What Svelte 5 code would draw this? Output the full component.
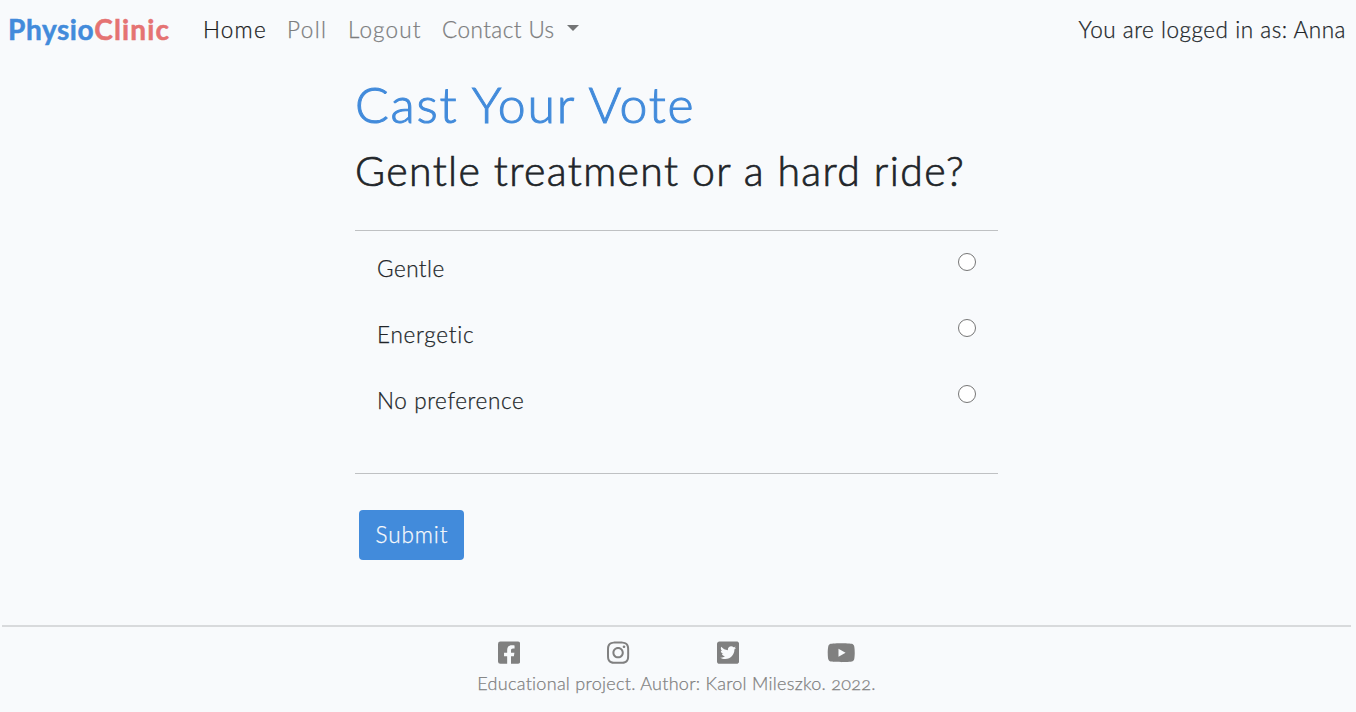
<script>
  const links = [
    { label: 'Home', width: 84, spacing: 1.2, active: true },
    { label: 'Poll', width: 61, spacing: 1.4 },
    { label: 'Logout', width: 94, spacing: 1.15 },
    { label: 'Contact Us', width: 137, spacing: 0.45, menu: true }
  ];
  const options = [
    { label: 'Gentle', spacing: 0.5 },
    { label: 'Energetic', spacing: 0.73 },
    { label: 'No preference', spacing: 0.62 }
  ];
  const socials = [
    { name: 'Facebook', w: 448, d: 'M400 32H48A48 48 0 0 0 0 80v352a48 48 0 0 0 48 48h137.25V327.69h-63V256h63v-54.64c0-62.15 37-96.48 93.67-96.48 27.14 0 55.52 4.84 55.52 4.84v61h-31.27c-30.81 0-40.42 19.12-40.42 38.73V256h68.78l-11 71.69h-57.78V480H400a48 48 0 0 0 48-48V80a48 48 0 0 0-48-48z' },
    { name: 'Instagram', w: 448, d: 'M224.1 141c-63.6 0-114.9 51.3-114.9 114.9s51.3 114.9 114.9 114.9S339 319.5 339 255.9 287.7 141 224.1 141zm0 189.6c-41.1 0-74.7-33.5-74.7-74.7s33.5-74.7 74.7-74.7 74.7 33.5 74.7 74.7-33.6 74.7-74.7 74.7zm146.4-194.3c0 14.9-12 26.8-26.8 26.8-14.9 0-26.8-12-26.8-26.8s12-26.8 26.8-26.8 26.8 12 26.8 26.8zm76.1 27.2c-1.7-35.9-9.9-67.7-36.2-93.9-26.2-26.2-58-34.4-93.9-36.2-37-2.1-147.9-2.1-184.9 0-35.8 1.7-67.6 9.9-93.9 36.1s-34.4 58-36.2 93.9c-2.1 37-2.1 147.9 0 184.9 1.7 35.9 9.9 67.7 36.2 93.9s58 34.4 93.9 36.2c37 2.1 147.9 2.1 184.9 0 35.9-1.7 67.7-9.9 93.9-36.2 26.2-26.2 34.4-58 36.2-93.9 2.1-37 2.1-147.8 0-184.8zM398.8 388c-7.8 19.6-22.9 34.7-42.6 42.6-29.5 11.7-99.5 9-132.1 9s-102.7 2.6-132.1-9c-19.6-7.8-34.7-22.9-42.6-42.6-11.7-29.5-9-99.5-9-132.1s-2.6-102.7 9-132.1c7.8-19.6 22.9-34.7 42.6-42.6 29.5-11.7 99.5-9 132.1-9s102.7-2.6 132.1 9c19.6 7.8 34.7 22.9 42.6 42.6 11.7 29.5 9 99.5 9 132.1s2.7 102.7-9 132.1z' },
    { name: 'Twitter', w: 448, d: 'M400 32H48C21.5 32 0 53.5 0 80v352c0 26.5 21.5 48 48 48h352c26.5 0 48-21.5 48-48V80c0-26.500-21.500-48-48-48zm-48.900 158.800c.2 2.800.2 5.700.2 8.500 0 86.700-66 186.600-186.600 186.600-37.200 0-71.700-10.800-100.700-29.400 5.300.6 10.400.8 15.800.8 30.700 0 58.900-10.400 81.400-28-28.800-.6-53-19.500-61.300-45.500 10.100 1.500 19.200 1.500 29.600-1.200-30-6.100-52.500-32.500-52.500-64.400v-.8c8.700 4.900 18.900 7.900 29.600 8.300a65.447 65.447 0 0 1-29.200-54.600c0-12.200 3.200-23.400 8.900-33.100 32.300 39.800 80.800 65.800 135.200 68.600-9.300-44.500 24-80.600 64-80.600 18.900 0 35.900 7.900 47.900 20.700 14.800-2.800 29-8.300 41.600-15.800-4.900 15.200-15.200 28-28.800 36.100 13.200-1.400 26-5.100 37.800-10.200-8.900 13.100-20.100 24.700-32.900 34z' },
    { name: 'YouTube', w: 576, d: 'M549.655 124.083c-6.281-23.650-24.787-42.276-48.284-48.597C458.781 64 288 64 288 64S117.220 64 74.629 75.486c-23.497 6.322-42.003 24.947-48.284 48.597-11.412 42.867-11.412 132.305-11.412 132.305s0 89.438 11.412 132.305c6.281 23.650 24.787 41.500 48.284 47.821C117.220 448 288 448 288 448s170.780 0 213.371-11.486c23.497-6.321 42.003-24.171 48.284-47.821 11.412-42.867 11.412-132.305 11.412-132.305s0-89.438-11.412-132.305zm-317.510 213.508V175.185l142.739 81.205-142.739 81.201z' }
  ];
  let choice = $state('');
</script>

<div class="page">
  <nav>
    <a class="brand" href="#home"><span class="physio">Physio</span><span class="clinic">Clinic</span></a>
    <ul>
      {#each links as link}
        <li style="width: {link.width}px">
          <a href="#nav" class:active={link.active} style="letter-spacing: {link.spacing}px">{link.label}</a>
          {#if link.menu}<i class="caret"></i>{/if}
        </li>
      {/each}
    </ul>
    <span class="user">You are logged in as: Anna</span>
  </nav>

  <main>
    <h1>Cast Your Vote</h1>
    <h2>Gentle treatment or a hard ride?</h2>
    <form onsubmit={(e) => e.preventDefault()}>
      <div class="options">
        {#each options as option}
          <label>
            <span style="letter-spacing: {option.spacing}px">{option.label}</span>
            <input type="radio" name="vote" value={option.label} bind:group={choice} />
          </label>
        {/each}
      </div>
      <button>Submit</button>
    </form>
  </main>

  <footer>
    <div class="socials">
      {#each socials as s}
        <a href="#social" aria-label={s.name}>
          <svg viewBox="0 0 {s.w} 512" width={s.w / 20.2} height="25.35"><path d={s.d} /></svg>
        </a>
      {/each}
    </div>
    <p>Educational project. Author: Karol Mileszko. 2022.</p>
  </footer>
</div>

<style>
  :global(body) { background: #f8fafc; }
  .page {
    box-sizing: border-box;
    height: 712px;
    display: flex;
    flex-direction: column;
    overflow: hidden;
    background: #f8fafc;
    color: #212529;
    font: 300 22.5px/33px Lato, sans-serif;
    -webkit-text-stroke: 0.25px currentColor;
  }
  a { color: inherit; text-decoration: none; }
  nav { display: flex; align-items: center; box-sizing: border-box; height: 58px; padding: 0 10px 0 8px; white-space: nowrap; }
  .brand { width: 195px; font-size: 28px; font-weight: 700; -webkit-text-stroke: 0.5px currentColor; }
  .physio { color: #428bdb; letter-spacing: 0.6px; }
  .clinic { color: #e57373; letter-spacing: 1.15px; }
  ul { display: flex; margin: 0; padding: 0; list-style: none; color: #7c7d7e; }
  li { display: flex; align-items: center; justify-content: space-between; }
  .active { color: #1a1b1c; }
  .caret { width: 0; height: 0; margin-top: -2px; border: 6.5px solid transparent; border-top-color: #737475; border-bottom: 0; }
  .user { margin-left: auto; letter-spacing: 0.53px; }
  main { width: 643px; margin-left: 355px; }
  h1 { margin: 16px 0 0; color: #428bdb; font: 300 50px/60px Lato, sans-serif; letter-spacing: 1.72px; -webkit-text-stroke: 1px currentColor; white-space: nowrap; }
  h2 { margin: 12px 0 0; font: 300 41px/50px Lato, sans-serif; letter-spacing: 1.38px; -webkit-text-stroke: 0.7px currentColor; white-space: nowrap; }
  .options { box-sizing: border-box; height: 244px; margin-top: 34px; padding: 22px 22px 0; border: solid #bfc1c3; border-width: 1px 0; }
  label { display: flex; justify-content: space-between; height: 66px; }
  label span { line-height: 31px; }
  input { appearance: none; box-sizing: border-box; width: 18px; height: 18px; margin: 0; border: 1.5px solid #767676; border-radius: 50%; background: #fff; }
  input:checked { box-shadow: inset 0 0 0 3px #fff; background: #428bdb; }
  button { box-sizing: border-box; width: 105px; height: 50px; margin: 36px 0 0 4px; padding: 0 0 2px 1px; border: 0; border-radius: 4px; background: #428bdb; color: #f8fafc; font: inherit; letter-spacing: 0.9px; -webkit-text-stroke: 0.25px currentColor; }
  footer { margin: auto 5px 0 2px; height: 87px; box-sizing: border-box; border-top: 2px solid #d8dadc; color: #808080; }
  .socials { display: flex; justify-content: space-between; width: 358px; margin: 13px auto 0; }
  .socials a { display: flex; height: 25px; }
  svg { fill: #808080; }
  p { margin: 4px 0 0; text-align: center; font-size: 18px; line-height: 28px; letter-spacing: 0.28px; font-variant-numeric: oldstyle-nums; }
</style>
